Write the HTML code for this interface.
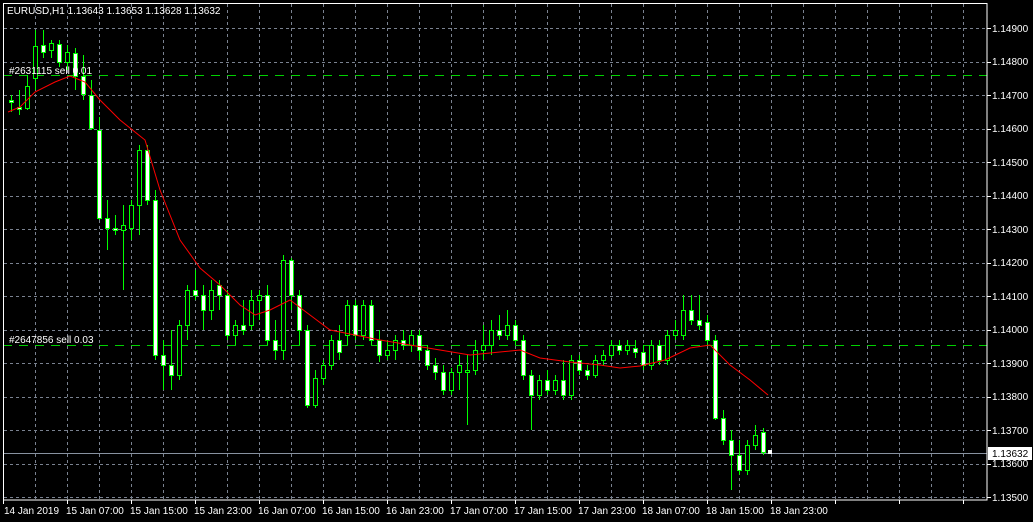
<!DOCTYPE html>
<html><head><meta charset="utf-8"><style>
html,body{margin:0;padding:0;background:#000;width:1033px;height:522px;overflow:hidden}
svg{display:block}
text{font-family:"Liberation Sans",sans-serif;font-size:10px;fill:#fff}
</style></head><body>
<svg id="s" width="1033" height="522" xmlns="http://www.w3.org/2000/svg">
<g id="grid"></g>
<line x1="3" y1="75.5" x2="987" y2="75.5" stroke="#00d000" stroke-dasharray="9,7"/>
<line x1="3" y1="345.5" x2="987" y2="345.5" stroke="#00d000" stroke-dasharray="9,7"/>
<line x1="3" y1="453.5" x2="987" y2="453.5" stroke="#8892a0"/>
<g id="c"></g>
<polyline fill="none" stroke="#ff0000" stroke-width="1" points="8,112 20,107 35,92 55,82 70,76 85,82 100,100 120,120 145,140 160,190 180,240 200,268 220,285 240,305 255,315 270,310 290,300 310,315 330,330 355,335 380,340 410,345 440,350 470,355 500,352 520,350 540,358 570,362 600,365 620,368 640,366 665,360 690,348 710,345 730,365 750,380 768,395"/>
<rect x="768" y="450" width="4" height="4" fill="#fff"/>
<rect x="3.5" y="3.5" width="983.5" height="496.5" fill="none" stroke="#fff"/>
<text x="7" y="14">EURUSD,H1  1.13643 1.13653 1.13628 1.13632</text>
<text x="9" y="74">#2631115 sell 0.01</text>
<text x="9" y="343">#2647856 sell 0.03</text>
<g id="ax">
<text x="992" y="32">1.14900</text>
<text x="992" y="65">1.14800</text>
<text x="992" y="99">1.14700</text>
<text x="992" y="132">1.14600</text>
<text x="992" y="166">1.14500</text>
<text x="992" y="199">1.14400</text>
<text x="992" y="233">1.14300</text>
<text x="992" y="266">1.14200</text>
<text x="992" y="300">1.14100</text>
<text x="992" y="333">1.14000</text>
<text x="992" y="367">1.13900</text>
<text x="992" y="400">1.13800</text>
<text x="992" y="434">1.13700</text>
<text x="992" y="467">1.13600</text>
<text x="992" y="501">1.13500</text>
</g>
<rect x="988" y="447" width="44" height="13" fill="#fff"/>
<text x="992" y="457" style="fill:#000">1.13632</text>
<text x="4" y="514">14 Jan 2019</text>
<text x="66" y="514">15 Jan 07:00</text>
<text x="130" y="514">15 Jan 15:00</text>
<text x="194" y="514">15 Jan 23:00</text>
<text x="258" y="514">16 Jan 07:00</text>
<text x="322" y="514">16 Jan 15:00</text>
<text x="386" y="514">16 Jan 23:00</text>
<text x="450" y="514">17 Jan 07:00</text>
<text x="514" y="514">17 Jan 15:00</text>
<text x="578" y="514">17 Jan 23:00</text>
<text x="642" y="514">18 Jan 07:00</text>
<text x="706" y="514">18 Jan 15:00</text>
<text x="770" y="514">18 Jan 23:00</text>
</svg>
<script>
var NS="http://www.w3.org/2000/svg";
function el(p,t,a){var e=document.createElementNS(NS,t);for(var k in a)e.setAttribute(k,a[k]);p.appendChild(e);return e;}
var g=document.getElementById('grid');
for(var x=35;x<987;x+=32)el(g,'line',{x1:x+.5,y1:4,x2:x+.5,y2:499,stroke:'#7a8290','stroke-dasharray':'3,3'});
for(var i=0;i<15;i++){var y=Math.round(28+i*33.5)+.5;el(g,'line',{x1:4,y1:y,x2:987,y2:y,stroke:'#7a8290','stroke-dasharray':'3,3'});el(g,'line',{x1:987,y1:y,x2:991,y2:y,stroke:'#fff'});}
for(var x=3;x<987;x+=64)el(g,'line',{x1:x+.5,y1:500,x2:x+.5,y2:504,stroke:'#fff'});
var d=[[100,101,95,112],[107,108,90,115],[108,86,75,110],[78,46,30,90],[45,52,30,58],[50,43,40,58],[44,62,40,67],[62,52,45,70],[53,76,48,90],[76,94,55,100],[95,128,80,130],[130,218,117,220],[218,228,200,250],[228,230,215,235],[230,225,205,290],[228,205,200,240],[205,150,145,235],[150,200,145,205],[200,355,190,360],[355,365,340,390],[365,375,330,390],[375,325,320,380],[325,290,285,340],[290,295,270,300],[295,310,285,330],[310,290,280,320],[285,295,280,310],[295,335,290,340],[335,325,320,345],[325,330,300,335],[325,300,290,330],[300,295,290,320],[295,340,285,345],[340,350,320,360],[350,260,255,360],[260,295,258,310],[295,330,290,345],[330,405,325,408],[405,378,370,408],[378,365,360,385],[365,340,335,370],[340,352,325,360],[335,305,300,345],[305,335,300,340],[335,305,300,340],[305,340,300,345],[340,355,330,362],[355,350,340,360],[350,340,335,360],[340,345,330,350],[345,335,330,352],[335,350,330,360],[350,365,345,370],[365,372,358,380],[372,390,365,395],[390,372,368,395],[372,365,355,390],[372,370,355,425],[370,350,340,375],[350,345,325,360],[345,330,320,355],[330,335,315,340],[335,325,310,340],[325,340,320,345],[340,375,335,380],[375,395,370,430],[395,380,375,400],[380,390,370,395],[390,380,375,395],[380,395,360,400],[395,360,355,400],[360,370,355,375],[370,375,365,380],[375,360,355,378],[360,355,350,365],[355,345,340,358],[345,350,340,355],[350,345,340,355],[348,352,340,358],[352,365,345,370],[365,345,340,370],[345,360,340,365],[360,335,330,365],[335,330,320,340],[335,310,295,340],[310,320,295,325],[320,325,295,330],[322,340,315,345],[340,418,335,420],[418,440,410,445],[440,455,430,490],[455,470,440,475],[470,445,440,475],[445,435,425,450],[432,452,428,455]];
var c=document.getElementById('c');
d.forEach(function(v,k){var x=11+8*k;var o=v[0],cl=v[1],h=v[2],l=v[3];var top=Math.min(o,cl),bot=Math.max(o,cl);
el(c,'line',{x1:x+.5,y1:h,x2:x+.5,y2:l,stroke:'#00ff00'});
var up=cl<o;
if(bot-top<2)bot=top+2;
el(c,'rect',{x:x-1.5,y:top+.5,width:4,height:bot-top,fill:up?'#000':'#fff',stroke:'#00ff00'});});
</script>
</body></html>
